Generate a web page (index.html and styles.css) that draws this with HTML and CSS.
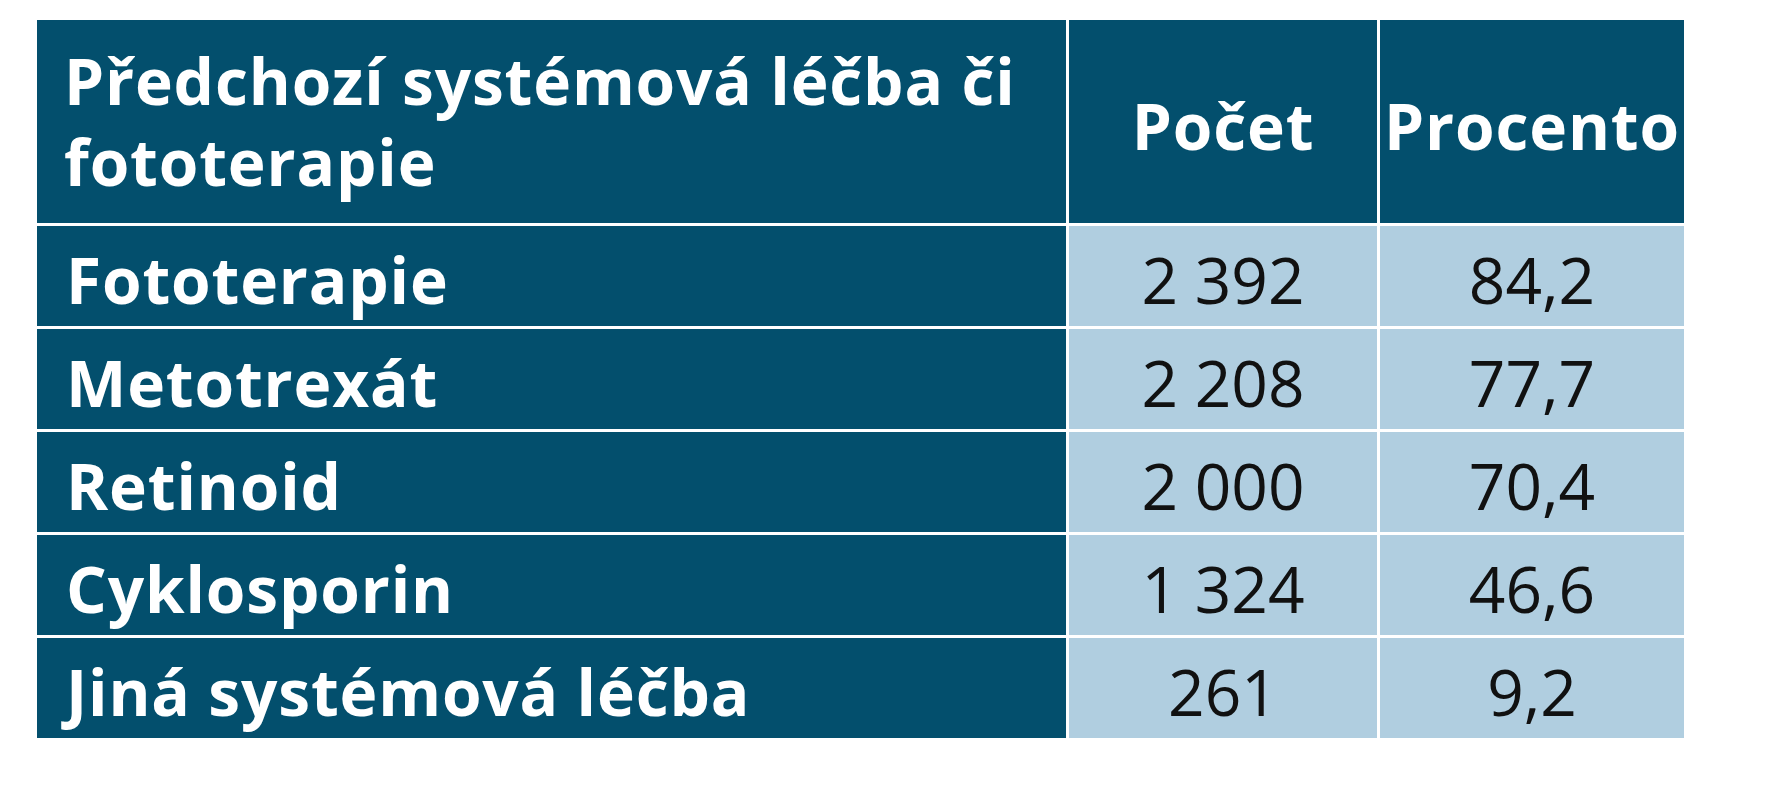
FILE: index.html
```html
<!DOCTYPE html>
<html lang="cs">
<head>
<meta charset="utf-8">
<title>Předchozí systémová léčba</title>
<link rel="stylesheet" href="styles.css">
</head>
<body>
<div class="table" role="table">
  <div class="cell head label" role="columnheader">Předchozí systémová léčba či<br>fototerapie</div>
  <div class="cell head num" role="columnheader">Počet</div>
  <div class="cell head num" role="columnheader">Procento</div>

  <div class="cell label" role="rowheader">Fototerapie</div>
  <div class="cell val" role="cell">2 392</div>
  <div class="cell val" role="cell">84,2</div>

  <div class="cell label" role="rowheader">Metotrexát</div>
  <div class="cell val" role="cell">2 208</div>
  <div class="cell val" role="cell">77,7</div>

  <div class="cell label" role="rowheader">Retinoid</div>
  <div class="cell val" role="cell">2 000</div>
  <div class="cell val" role="cell">70,4</div>

  <div class="cell label" role="rowheader">Cyklosporin</div>
  <div class="cell val" role="cell">1 324</div>
  <div class="cell val" role="cell">46,6</div>

  <div class="cell label" role="rowheader">Jiná systémová léčba</div>
  <div class="cell val" role="cell">261</div>
  <div class="cell val" role="cell">9,2</div>
</div>
</body>
</html>
```

FILE: styles.css
```css
html, body {
  margin: 0;
  padding: 0;
  background: #ffffff;
}

body {
  padding: 20px 0 0 37px;
  font-family: "Open Sans", "Lato", sans-serif;
}

.table {
  display: grid;
  grid-template-columns: 1029px 308px 304px;
  grid-template-rows: 203px repeat(5, 100px);
  gap: 3px;
  background: #ffffff;
  width: max-content;
}

.cell {
  display: flex;
  align-items: center;
  font-size: 64px;
  line-height: 1.2;
  white-space: nowrap;
}

.head, .label {
  background: #034f6d;
  color: #ffffff;
  font-weight: 700;
  letter-spacing: 0.85px;
}

.head.label {
  line-height: 81px;
  padding: 0 0 2px 27px;
}

.label {
  padding: 8px 0 0 29px;
}

.num {
  justify-content: center;
  padding-top: 10px;
}

.val {
  background: #b0cee0;
  color: #111111;
  font-weight: 400;
  letter-spacing: 0;
  justify-content: center;
  padding-top: 8px;
}
```
